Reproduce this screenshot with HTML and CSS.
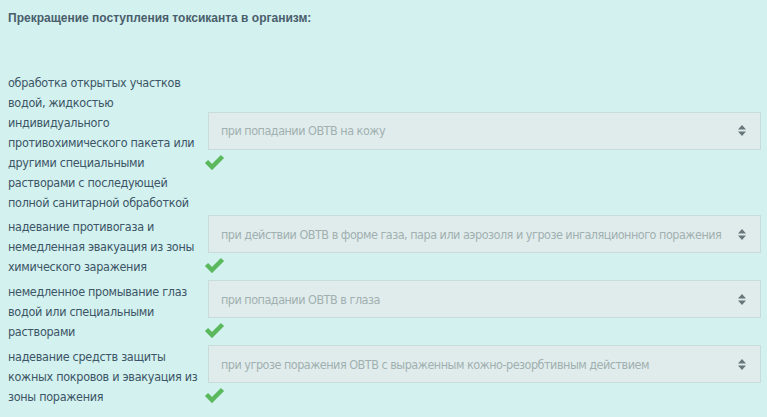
FILE: index.html
```html
<!DOCTYPE html>
<html lang="ru">
<head>
    <meta charset="UTF-8">
    <title>Прекращение поступления токсиканта</title>
    <link rel="stylesheet" href="styles.css">
</head>
<body>
    <h4 class="title">Прекращение поступления токсиканта в организм:</h4>

    <div class="match">
        <div class="row">
            <div class="term">обработка открытых участков водой, жидкостью индивидуального противохимического пакета или другими специальными растворами с последующей полной санитарной обработкой</div>
            <div class="answer">
                <div class="select">
                    <span>при попадании ОВТВ на кожу</span>
                    <svg class="caret" width="8" height="11" viewBox="0 0 8 11"><path d="M0 4.5 L4 0 L8 4.5 Z M0 6.5 L4 11 L8 6.5 Z"/></svg>
                </div>
                <svg class="ok" width="21" height="17" viewBox="0 0 21 17"><path d="M2.5 8.5 L8 14 L18.5 3.5"/></svg>
            </div>
        </div>

        <div class="row">
            <div class="term">надевание противогаза и немедленная эвакуация из зоны химического заражения</div>
            <div class="answer">
                <div class="select">
                    <span>при действии ОВТВ в форме газа, пара или аэрозоля и угрозе ингаляционного поражения</span>
                    <svg class="caret" width="8" height="11" viewBox="0 0 8 11"><path d="M0 4.5 L4 0 L8 4.5 Z M0 6.5 L4 11 L8 6.5 Z"/></svg>
                </div>
                <svg class="ok" width="21" height="17" viewBox="0 0 21 17"><path d="M2.5 8.5 L8 14 L18.5 3.5"/></svg>
            </div>
        </div>

        <div class="row">
            <div class="term">немедленное промывание глаз водой или специальными растворами</div>
            <div class="answer">
                <div class="select">
                    <span>при попадании ОВТВ в глаза</span>
                    <svg class="caret" width="8" height="11" viewBox="0 0 8 11"><path d="M0 4.5 L4 0 L8 4.5 Z M0 6.5 L4 11 L8 6.5 Z"/></svg>
                </div>
                <svg class="ok" width="21" height="17" viewBox="0 0 21 17"><path d="M2.5 8.5 L8 14 L18.5 3.5"/></svg>
            </div>
        </div>

        <div class="row">
            <div class="term">надевание средств защиты кожных покровов и эвакуация из зоны поражения</div>
            <div class="answer">
                <div class="select">
                    <span>при угрозе поражения ОВТВ с выраженным кожно-резорбтивным действием</span>
                    <svg class="caret" width="8" height="11" viewBox="0 0 8 11"><path d="M0 4.5 L4 0 L8 4.5 Z M0 6.5 L4 11 L8 6.5 Z"/></svg>
                </div>
                <svg class="ok" width="21" height="17" viewBox="0 0 21 17"><path d="M2.5 8.5 L8 14 L18.5 3.5"/></svg>
            </div>
        </div>
    </div>
</body>
</html>
```

FILE: styles.css
```css
* { margin: 0; padding: 0; box-sizing: border-box; }

body {
    background: #d2f1ef;
    color: #3d5566;
    font-family: "DejaVu Sans Condensed", "DejaVu Sans", sans-serif;
    font-stretch: condensed;
    padding: 0 6px 0 8px;
}

.title {
    font-family: "Liberation Sans", Arial, sans-serif;
    font-stretch: normal;
    font-size: 12px;
    font-weight: bold;
    color: #4a5e6c;
    padding-top: 11px;
    line-height: 15px;
    margin-bottom: 47px;
}

/* matching rows */
.match {
    display: flex;
    flex-direction: column;
    gap: 2px;
}

.row {
    display: grid;
    grid-template-columns: 198px 1fr;
    column-gap: 2px;
    align-items: center;
}

.term {
    font-size: 12.5px;
    letter-spacing: -0.3px;
    line-height: 20px;
}

.answer {
    height: 63px;
}

.select {
    height: 38px;
    display: flex;
    align-items: center;
    justify-content: space-between;
    padding: 0 14px 0 12px;
    background: #e0ecec;
    border: 1px solid #c8dcdc;
    color: #a0b0b0;
    font-size: 12.5px;
    letter-spacing: -0.5px;
    white-space: nowrap;
}

.caret {
    flex-shrink: 0;
    margin-left: 8px;
    fill: #66767a;
}

.ok {
    display: block;
    margin: 3px 0 0 -4px;
    fill: none;
    stroke: #5cb85c;
    stroke-width: 4.5;
}
```
